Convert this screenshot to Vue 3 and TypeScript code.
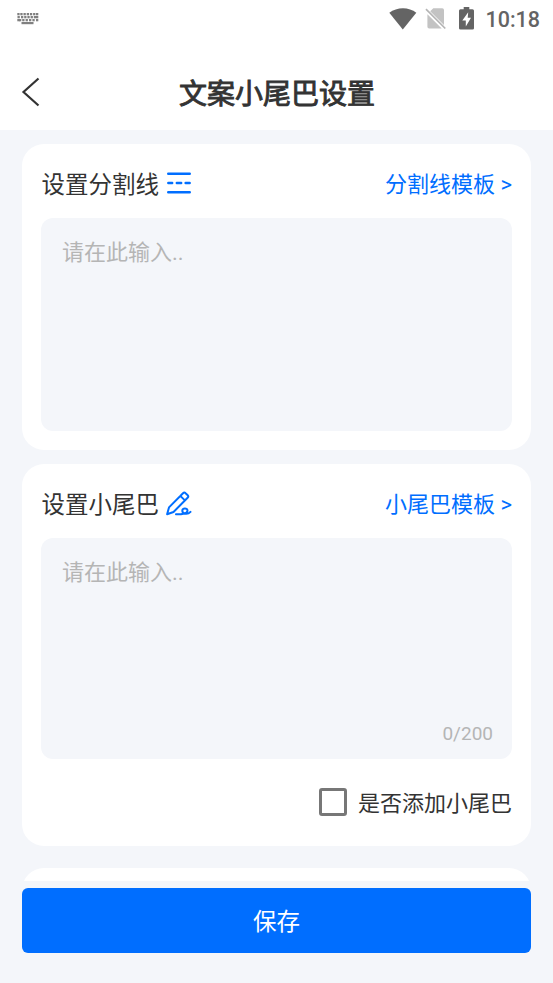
<script setup lang="ts">
import { ref } from 'vue'

const divider = ref('')
const tail = ref('')
const appendTail = ref(false)
const maxLength = 200
const keyRows = [
  [0.3, 3.3, 6.5, 9.7, 12.9, 16.1, 19],
  [0.5, 4, 7.2, 10.4, 13.6, 16.8, 19],
  [0.3, 2, 5.2, 8.6, 12, 15.4, 19],
]
</script>

<template>
  <div class="screen">
    <div class="status">
      <svg class="keyboard" width="22" height="14" viewBox="0 0 22 14">
        <g v-for="(row, r) in keyRows" :key="r">
          <rect v-for="x in row" :key="x" :x="x" :y="1 + r * 3" width="2.3" height="2.3" />
        </g>
        <rect x="4.5" y="10" width="12" height="2.2" />
      </svg>
      <div class="indicators">
        <svg class="wifi" width="28" height="22" viewBox="0 0 28 22">
          <path d="M0.3 4.8C8-1.2 20-1.2 27.3 4.8L13.8 21.5Z" />
        </svg>
        <svg class="sim" width="22" height="24" viewBox="0 0 22 24">
          <path d="M8.3 1.2H17.2Q19 1.2 19 3V17.9L5.2 4.3ZM2.4 7.2L16.7 21.5H4.2Q2.4 21.5 2.4 19.7Z" fill="#c3c3c3" />
          <path d="M1 2.2L20.3 21.5" stroke="#b5b5b5" stroke-width="1.7" />
        </svg>
        <svg class="battery" width="15" height="23" viewBox="0 0 15 23">
          <path d="M4.7 0H10.3V2.2H13.5Q15 2.2 15 3.7V21.3Q15 22.6 13.5 22.6H1.5Q0 22.6 0 21.3V3.7Q0 2.2 1.5 2.2H4.7Z" />
          <path d="M9.2 5.2L3.3 13.5H6.8V19.5L12 10.8H8.7Z" fill="#fff" />
        </svg>
        <span class="clock">10:18</span>
      </div>
    </div>

    <header class="header">
      <button class="back" type="button" aria-label="返回">
        <svg width="20" height="32" viewBox="0 0 20 32">
          <path d="M17.5 2.5L2.5 16L17.5 29.5" />
        </svg>
      </button>
      <h1>文案小尾巴设置</h1>
    </header>

    <main class="content">
      <section class="card">
        <div class="row">
          <h2>设置分割线</h2>
          <svg class="icon" width="26" height="26" viewBox="0 0 26 26">
            <path d="M2.3 3.8H23.7M2.3 22.2H23.7" stroke-width="2.6" />
            <path d="M2.3 13H6.2M10.8 13H15.2M19.6 13H23.7" stroke-width="2.4" />
          </svg>
          <a class="link">分割线模板 &gt;</a>
        </div>
        <div class="field first">
          <textarea v-model="divider" placeholder="请在此输入.."></textarea>
        </div>
      </section>

      <section class="card tail">
        <div class="row">
          <h2>设置小尾巴</h2>
          <svg class="icon" width="26" height="26" viewBox="0 0 26 26">
            <path d="M1.1 24.2L3 17.4L17 3.2Q18.3 1.9 19.6 3.2L21.7 5.2Q22.9 6.5 21.6 7.8L7.5 22ZM14.3 5.9L18.9 10.4" stroke-width="2" />
            <path d="M10 24.2C14.4 24.7 21.2 23.8 21.5 20.8C21.6 17.8 16.4 17.5 16.3 20.8C16.3 23.9 21.4 25.2 24.5 21.9" stroke-width="2" />
          </svg>
          <a class="link">小尾巴模板 &gt;</a>
        </div>
        <div class="field second">
          <textarea v-model="tail" :maxlength="maxLength" placeholder="请在此输入.."></textarea>
          <div class="count">{{ tail.length }}/{{ maxLength }}</div>
        </div>
        <label class="check">
          <input v-model="appendTail" type="checkbox" />
          <span>是否添加小尾巴</span>
        </label>
      </section>

      <section class="card next"></section>
    </main>

    <footer class="footer">
      <button class="save" type="button">保存</button>
    </footer>
  </div>
</template>

<style>
body {
  background: #f4f6fa;
}
</style>

<style scoped>
.screen {
  display: flex;
  flex-direction: column;
  height: 983px;
  overflow: hidden;
  background: #f4f6fa;
  color: #333;
  font-family: Roboto, "Noto Sans CJK SC", sans-serif;
}
.status {
  display: flex;
  justify-content: space-between;
  flex: none;
  height: 57px;
  padding: 0 13px 0 17px;
  box-sizing: border-box;
  background: #fff;
}
.keyboard {
  margin-top: 12px;
  fill: #808080;
}
.indicators {
  display: flex;
  align-items: flex-start;
  fill: #646464;
}
.wifi {
  margin: 8px 8px 0 0;
}
.sim {
  margin: 7px 12px 0 0;
}
.battery {
  margin: 7px 11px 0 0;
}
.clock {
  margin-top: 6px;
  color: #646464;
  font-size: 21.5px;
  font-weight: 500;
  line-height: 28px;
}
.header {
  display: grid;
  grid-template-columns: 60px 1fr 60px;
  align-items: center;
  flex: none;
  height: 72.5px;
  background: #fff;
}
.back {
  display: flex;
  padding: 0 0 2px 21px;
  border: 0;
  background: none;
}
.back path {
  fill: none;
  stroke: #333;
  stroke-width: 2.2;
}
h1 {
  margin: 0;
  padding: 3px 0 0 1px;
  text-align: center;
  font-size: 28px;
  font-weight: 400;
  line-height: 40px;
  white-space: nowrap;
  -webkit-text-stroke: 0.9px #333;
}
.content {
  display: flex;
  flex-direction: column;
  flex: none;
  height: 751.5px;
  padding: 14.5px 22px 0;
  box-sizing: border-box;
  overflow: hidden;
}
.card {
  flex: none;
  height: 305.5px;
  padding: 0 19px;
  box-sizing: border-box;
  border-radius: 22px;
  background: #fff;
}
.card.tail {
  height: 382px;
  margin-top: 14.5px;
}
.card.next {
  height: 120px;
  margin-top: 22px;
}
.row {
  display: flex;
  align-items: center;
  height: 74px;
  padding-top: 4px;
  box-sizing: border-box;
}
h2 {
  margin: 0;
  padding: 4px 0 0 0.5px;
  font-size: 23.5px;
  font-weight: 400;
  line-height: 34px;
}
.icon {
  margin: 0 0 0 6.5px;
  fill: none;
  stroke: #006eff;
  stroke-linecap: round;
  stroke-linejoin: round;
}
.link {
  margin-left: auto;
  padding-top: 4px;
  color: #006eff;
  font-size: 22px;
  line-height: 32px;
}
.field {
  display: flex;
  flex-direction: column;
  padding: 19px 19px 11px 21px;
  box-sizing: border-box;
  border-radius: 12px;
  background: #f4f6fa;
}
.first {
  height: 213px;
}
.second {
  height: 220.5px;
}
textarea {
  flex: 1;
  padding: 0;
  border: 0;
  outline: 0;
  resize: none;
  background: transparent;
  color: #333;
  font: 22px/32px Roboto, "Noto Sans CJK SC", sans-serif;
}
textarea::placeholder {
  color: #b5b5b5;
}
.count {
  color: #b5b5b5;
  text-align: right;
  font-size: 19px;
  line-height: 28px;
}
.check {
  display: flex;
  justify-content: flex-end;
  align-items: center;
  margin-top: 26.5px;
  height: 34px;
  font-size: 22px;
  line-height: 32px;
}
.check span {
  padding-top: 4px;
}
.check input {
  appearance: none;
  width: 28px;
  height: 28px;
  margin: 0 11px 0 0;
  border: 3px solid #777;
  border-radius: 3px;
  background: #fff;
}
.check input:checked {
  border-color: #006eff;
  background: #006eff;
}
.footer {
  flex: 1;
  padding: 7px 22px 0;
}
.save {
  display: block;
  width: 100%;
  height: 65px;
  padding: 3px 0 0;
  border: 0;
  border-radius: 6px;
  background: #006eff;
  color: #fff;
  font: 23.5px/34px Roboto, "Noto Sans CJK SC", sans-serif;
}
</style>
